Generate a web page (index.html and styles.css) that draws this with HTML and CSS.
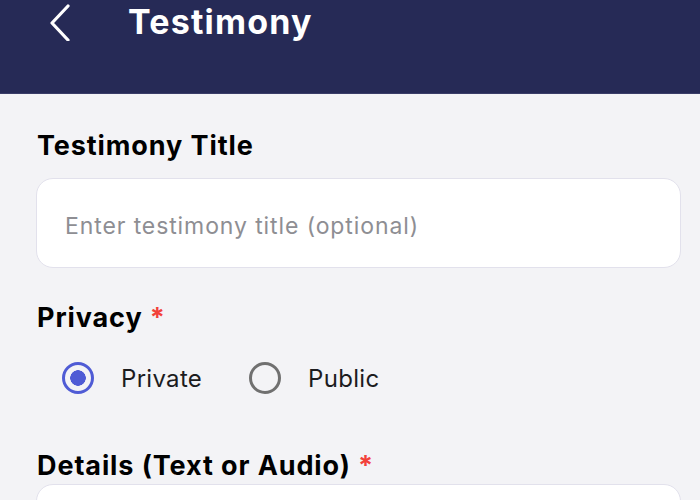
FILE: index.html
```html
<!DOCTYPE html>
<html>
<head>
<meta charset="utf-8">
<link rel="stylesheet" href="styles.css">
</head>
<body>
<header class="topbar">
  <svg class="back" width="24" height="40" viewBox="0 0 24 40"><path d="M19 5 L3 22 L19 39" fill="none" stroke="#fff" stroke-width="3.2" stroke-linecap="round" stroke-linejoin="round"/></svg>
  <h1 class="title">Testimony</h1>
</header>
<main class="form">
  <section class="field">
    <div class="label">Testimony Title</div>
    <div class="input"><span class="placeholder">Enter testimony title (optional)</span></div>
  </section>
  <section class="field">
    <div class="label">Privacy <span class="req">*</span></div>
    <div class="radios">
      <div class="radio"><span class="dot on"></span><span>Private</span></div>
      <div class="radio"><span class="dot"></span><span>Public</span></div>
    </div>
  </section>
  <section class="field">
    <div class="label details">Details (Text or Audio) <span class="req">*</span></div>
    <div class="input tall"></div>
  </section>
</main>
</body>
</html>
```
FILE: styles.css
```css
* { box-sizing: border-box; }
html, body { margin: 0; padding: 0; }
body {
  width: 700px;
  height: 500px;
  overflow: hidden;
  background: #f3f3f6;
  font-family: Inter, "Noto Sans", sans-serif;
  color: #000;
}
.topbar {
  height: 94px;
  background: #262a56;
  border-bottom: 1px solid #3a3d68;
  display: flex;
  align-items: flex-start;
  padding-left: 49px;
}
.back { margin-top: 1px; }
.title {
  margin: 0 0 0 55px;
  color: #fff;
  font-size: 34px;
  font-weight: 700;
  line-height: 44px;
  letter-spacing: 1.2px;
}
.form { padding: 36px 19px 0 36px; }
.field { display: flex; flex-direction: column; }
.label {
  font-size: 27px;
  font-weight: 700;
  line-height: 32px;
  padding-left: 1px;
  letter-spacing: 0.9px;
}
.req { color: #f2413a; }
.input {
  margin-top: 16px;
  height: 90px;
  background: #fff;
  border: 1.5px solid #e2e1ec;
  border-radius: 17px;
  display: flex;
  align-items: center;
  padding-left: 28px;
  padding-top: 6px;
}
.placeholder { color: #8e8e93; font-size: 23px; letter-spacing: 0.9px; }
.field + .field { margin-top: 34px; }
.radios { display: flex; margin-top: 24px; padding-left: 26px; gap: 47px; height: 40px; align-items: center; }
.radio { display: flex; align-items: center; gap: 27px; font-size: 24px; color: #1c1c1e; letter-spacing: 0.3px; }
.dot {
  width: 32px; height: 32px; border-radius: 50%;
  border: 3.5px solid #707070;
  display: inline-block;
}
.dot.on { border-color: #4f5bd5; background: radial-gradient(circle, #4f5bd5 0 7.5px, transparent 8px); }
.details { margin-top: 18px; }
.tall { height: 120px; margin-top: 2px; }
```
